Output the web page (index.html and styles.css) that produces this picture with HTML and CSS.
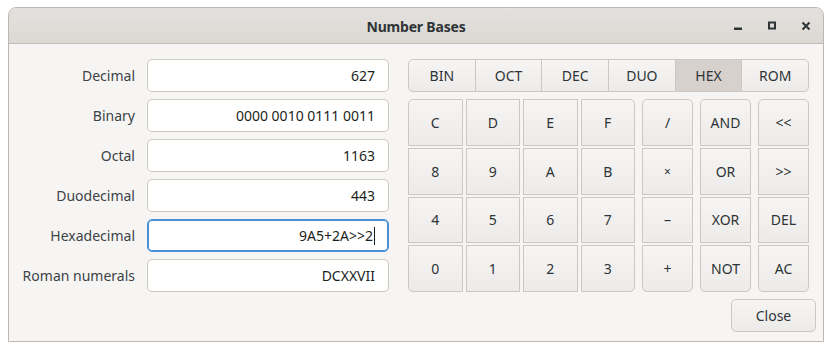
FILE: index.html
```html
<!DOCTYPE html>
<html lang="en">
<head>
    <meta charset="UTF-8">
    <meta name="viewport" content="width=device-width, initial-scale=1.0">
    <title>Number Bases</title>
    <link rel="stylesheet" href="styles.css">
</head>
<body>
    <div class="window">
        <div class="titlebar">
            <span class="title">Number Bases</span>
            <div class="controls">
                <svg class="ctl" width="12" height="12" viewBox="0 0 12 12"><rect x="2" y="7.5" width="8" height="2.5" fill="#2e3436"/></svg>
                <svg class="ctl" width="12" height="12" viewBox="0 0 12 12"><rect x="3" y="2.5" width="6" height="6" fill="none" stroke="#2e3436" stroke-width="2"/></svg>
                <svg class="ctl" width="12" height="12" viewBox="0 0 12 12"><path d="M2.5 2.5 L9.5 9.5 M9.5 2.5 L2.5 9.5" stroke="#2e3436" stroke-width="2"/></svg>
            </div>
        </div>

        <div class="content">
            <div class="main">
                <div class="fields">
                    <label>Decimal</label>
                    <div class="entry">627</div>
                    <label>Binary</label>
                    <div class="entry">0000 0010 0111 0011</div>
                    <label>Octal</label>
                    <div class="entry">1163</div>
                    <label>Duodecimal</label>
                    <div class="entry">443</div>
                    <label>Hexadecimal</label>
                    <div class="entry focused">9A5+2A&gt;&gt;2<span class="cursor"></span></div>
                    <label>Roman numerals</label>
                    <div class="entry">DCXXVII</div>
                </div>

                <div class="pad">
                    <div class="tabs">
                        <div class="tab">BIN</div>
                        <div class="tab">OCT</div>
                        <div class="tab">DEC</div>
                        <div class="tab">DUO</div>
                        <div class="tab active">HEX</div>
                        <div class="tab">ROM</div>
                    </div>

                    <div class="keys">
                        <div class="digits">
                            <button class="key tl">C</button>
                            <button class="key">D</button>
                            <button class="key">E</button>
                            <button class="key tr">F</button>
                            <button class="key">8</button>
                            <button class="key">9</button>
                            <button class="key">A</button>
                            <button class="key">B</button>
                            <button class="key">4</button>
                            <button class="key">5</button>
                            <button class="key">6</button>
                            <button class="key">7</button>
                            <button class="key bl">0</button>
                            <button class="key">1</button>
                            <button class="key">2</button>
                            <button class="key br">3</button>
                        </div>
                        <div class="column">
                            <button class="key">/</button>
                            <button class="key small">×</button>
                            <button class="key">–</button>
                            <button class="key">+</button>
                        </div>
                        <div class="column">
                            <button class="key">AND</button>
                            <button class="key">OR</button>
                            <button class="key">XOR</button>
                            <button class="key">NOT</button>
                        </div>
                        <div class="column">
                            <button class="key">&lt;&lt;</button>
                            <button class="key">&gt;&gt;</button>
                            <button class="key">DEL</button>
                            <button class="key">AC</button>
                        </div>
                    </div>
                </div>
            </div>

            <div class="actions">
                <button class="close-btn">Close</button>
            </div>
        </div>
    </div>
</body>
</html>
```

FILE: styles.css
```css
body {
    margin: 0;
    background-color: #ffffff;
    font-family: "Noto Sans", "DejaVu Sans", sans-serif;
    font-size: 14px;
    color: #2e3436;
}

.window {
    margin: 7px 0 0 8px;
    width: 814px;
    height: 333px;
    border: 1px solid #bdb7b1;
    border-radius: 8px 8px 0 0;
    background-color: #f6f5f4;
    display: flex;
    flex-direction: column;
    overflow: hidden;
}

.titlebar {
    height: 35px;
    background: linear-gradient(#e3e0dd, #dcd9d5);
    border-bottom: 1px solid #c3bdb7;
    display: flex;
    align-items: center;
    justify-content: center;
    position: relative;
}

.title {
    font-weight: bold;
    font-size: 14px;
    letter-spacing: -0.2px;
    margin-top: 2px;
}

.controls {
    position: absolute;
    right: 11px;
    top: 12px;
    display: flex;
    gap: 22px;
}

.ctl {
    display: block;
}

.content {
    flex: 1;
    padding: 15px 7px 9px 0;
    display: flex;
    flex-direction: column;
}

.main {
    display: flex;
    gap: 19px;
}

.fields {
    display: grid;
    grid-template-columns: 126px 242px;
    grid-auto-rows: 33px;
    column-gap: 12px;
    row-gap: 7px;
}

.fields label {
    text-align: right;
    align-self: center;
    color: #3d4345;
}

.entry {
    background-color: #ffffff;
    border: 1px solid #cdc7c2;
    border-radius: 5px;
    display: flex;
    align-items: center;
    justify-content: flex-end;
    padding-right: 13px;
    color: #1c1f20;
}

.entry.focused {
    border-color: #4a90d9;
    box-shadow: inset 0 0 0 1px #4a90d9;
}

.cursor {
    display: inline-block;
    width: 1px;
    height: 18px;
    background-color: #1c1f20;
    margin-left: 1px;
}

.pad {
    width: 401px;
    margin-right: 7px;
    display: flex;
    flex-direction: column;
    gap: 7px;
}

.tabs {
    height: 33px;
    box-sizing: border-box;
    display: flex;
    border: 1px solid #cdc7c2;
    border-radius: 5px;
    overflow: hidden;
    background: linear-gradient(#f6f5f4, #edebe9);
}

.tab {
    flex: 1;
    display: flex;
    align-items: center;
    justify-content: center;
    border-left: 1px solid #cdc7c2;
}

.tab:first-child {
    border-left: none;
}

.tab.active {
    background: #d6d1cd;
    border-left-color: #cdc7c2;
}

.keys {
    display: flex;
    gap: 7px;
    height: 193px;
}

.digits {
    width: 227px;
    display: grid;
    grid-template-columns: repeat(4, 1fr);
    grid-template-rows: repeat(4, 1fr);
    gap: 2px 3px;
}

.column {
    width: 51px;
    display: grid;
    grid-template-rows: repeat(4, 1fr);
    row-gap: 2px;
}

.key {
    font-family: inherit;
    font-size: 14px;
    color: #2e3436;
    border: 1px solid #cdc7c2;
    border-radius: 0;
    background: linear-gradient(#f6f5f4, #edebe9);
    padding: 0;
    margin: 0;
}

.key.small {
    font-size: 12px;
}

.digits .tl { border-top-left-radius: 5px; }
.digits .tr { border-top-right-radius: 5px; }
.digits .bl { border-bottom-left-radius: 5px; }
.digits .br { border-bottom-right-radius: 5px; }

.column .key:first-child {
    border-radius: 5px 5px 0 0;
}

.column .key:last-child {
    border-radius: 0 0 5px 5px;
}

.actions {
    display: flex;
    justify-content: flex-end;
    margin-top: 7px;
}

.close-btn {
    width: 85px;
    height: 33px;
    font-family: inherit;
    font-size: 14px;
    color: #2e3436;
    border: 1px solid #cdc7c2;
    border-radius: 5px;
    background: linear-gradient(#f6f5f4, #edebe9);
}
```
